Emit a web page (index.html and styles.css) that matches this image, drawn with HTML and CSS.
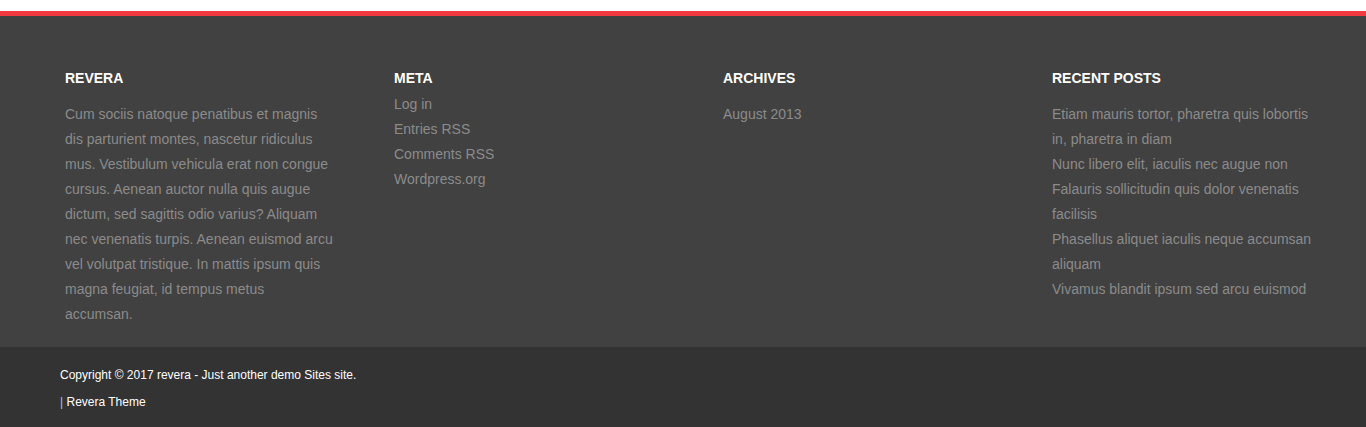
FILE: index.html
```html
<!DOCTYPE html>
<html lang="en">
<head>
<meta charset="utf-8">
<title>Revera footer</title>
<link rel="stylesheet" href="styles.css">
</head>
<body>
<div class="top-space"></div>
<footer class="site-footer">
  <div class="widgets">
    <section class="widget">
      <h3 class="widget-title">REVERA</h3>
      <p class="widget-text">Cum sociis natoque penatibus et magnis dis parturient montes, nascetur ridiculus mus. Vestibulum vehicula erat non congue cursus. Aenean auctor nulla quis augue dictum, sed sagittis odio varius? Aliquam nec venenatis turpis. Aenean euismod arcu vel volutpat tristique. In mattis ipsum quis magna feugiat, id tempus metus accumsan.</p>
    </section>
    <section class="widget">
      <h3 class="widget-title">META</h3>
      <ul class="widget-list tight">
        <li><a href="#">Log in</a></li>
        <li><a href="#">Entries RSS</a></li>
        <li><a href="#">Comments RSS</a></li>
        <li><a href="#">Wordpress.org</a></li>
      </ul>
    </section>
    <section class="widget">
      <h3 class="widget-title">ARCHIVES</h3>
      <ul class="widget-list">
        <li><a href="#">August 2013</a></li>
      </ul>
    </section>
    <section class="widget">
      <h3 class="widget-title">RECENT POSTS</h3>
      <ul class="widget-list">
        <li><a href="#">Etiam mauris tortor, pharetra quis lobortis in, pharetra in diam</a></li>
        <li><a href="#">Nunc libero elit, iaculis nec augue non</a></li>
        <li><a href="#">Falauris sollicitudin quis dolor venenatis facilisis</a></li>
        <li><a href="#">Phasellus aliquet iaculis neque accumsan aliquam</a></li>
        <li><a href="#">Vivamus blandit ipsum sed arcu euismod</a></li>
      </ul>
    </section>
  </div>
  <div class="site-info">
    <p class="info-line">Copyright © 2017 revera - Just another demo Sites site.</p>
    <p class="info-line"><span class="sep">|</span> <a href="#">Revera Theme</a></p>
  </div>
</footer>
</body>
</html>
```

FILE: styles.css
```css
html, body {
  margin: 0;
  padding: 0;
  background: #ffffff;
  overflow: hidden;
}

body {
  font-family: "Liberation Sans", Arial, Helvetica, sans-serif;
  height: 427px;
}

.top-space {
  height: 11px;
  background: #ffffff;
}

.site-footer {
  border-top: 5px solid #f1393f;
}

.widgets {
  background: #414141;
  display: grid;
  grid-template-columns: 329px 329px 329px 1fr;
  padding: 54px 0 21px 65px;
  height: 256px;
}

.widget {
  max-width: 270px;
}

.widget-title {
  margin: 0;
  font-size: 14px;
  line-height: 16px;
  font-weight: bold;
  color: #ffffff;
}

.widget-text {
  margin: 16px 0 0;
  font-size: 14px;
  line-height: 25px;
  color: #8b8b8b;
}

.widget-list {
  list-style: none;
  margin: 16px 0 0;
  padding: 0;
  font-size: 14px;
  line-height: 25px;
}

.widget-list.tight {
  margin-top: 6px;
}

.widget-list a {
  color: #8b8b8b;
  text-decoration: none;
}

.site-info {
  background: #333333;
  padding: 19px 60px 20px;
  height: 41px;
}

.info-line {
  margin: 0 0 9px;
  font-size: 12px;
  line-height: 18px;
  color: #ffffff;
}

.info-line a {
  color: #ffffff;
  text-decoration: none;
}

.sep {
  color: #9fc7ee;
}
```
